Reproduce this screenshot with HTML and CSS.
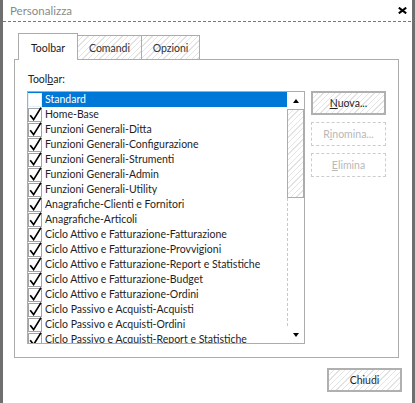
FILE: index.html
```html
<!DOCTYPE html>
<html lang="it">
<head>
<meta charset="utf-8">
<title>Personalizza</title>
<link rel="stylesheet" href="styles.css">
</head>
<body>
<svg class="defs" width="0" height="0" aria-hidden="true">
  <symbol id="chk" viewBox="0 0 14 15">
    <rect x="0.5" y="1.5" width="13" height="13" fill="#fff" stroke="#a3a3a3"/>
    <path d="M2.2 8.2 L5.6 12.6 L13 0.6" fill="none" stroke="#000" stroke-width="1.7" stroke-linejoin="miter"/>
  </symbol>
  <symbol id="unchk" viewBox="0 0 14 15">
    <rect x="0.5" y="1.5" width="13" height="13" fill="#fff" stroke="#e6f0fa"/>
  </symbol>
</svg>
<div class="window">
  <div class="titlebar">
    <span class="title">Personalizza</span>
    <svg class="close" width="9" height="7" viewBox="0 0 9 7"><path d="M0.8 0.6 L8.2 6.4 M8.2 0.6 L0.8 6.4" stroke="#000" stroke-width="2"/></svg>
  </div>
  <div class="tabs">
    <div class="tab active">Toolbar</div>
    <div class="tab hatch">Comandi</div>
    <div class="tab hatch">Opzioni</div>
  </div>
  <div class="panel">
    <div class="label">Tool<u>b</u>ar:</div>
    <div class="content">
      <div class="list">
        <div class="items">
          <div class="row sel"><svg class="cb"><use href="#unchk"/></svg>Standard</div>
          <div class="row"><svg class="cb"><use href="#chk"/></svg>Home-Base</div>
          <div class="row"><svg class="cb"><use href="#chk"/></svg>Funzioni Generali-Ditta</div>
          <div class="row"><svg class="cb"><use href="#chk"/></svg>Funzioni Generali-Configurazione</div>
          <div class="row"><svg class="cb"><use href="#chk"/></svg>Funzioni Generali-Strumenti</div>
          <div class="row"><svg class="cb"><use href="#chk"/></svg>Funzioni Generali-Admin</div>
          <div class="row"><svg class="cb"><use href="#chk"/></svg>Funzioni Generali-Utility</div>
          <div class="row"><svg class="cb"><use href="#chk"/></svg>Anagrafiche-Clienti e Fornitori</div>
          <div class="row"><svg class="cb"><use href="#chk"/></svg>Anagrafiche-Articoli</div>
          <div class="row"><svg class="cb"><use href="#chk"/></svg>Ciclo Attivo e Fatturazione-Fatturazione</div>
          <div class="row"><svg class="cb"><use href="#chk"/></svg>Ciclo Attivo e Fatturazione-Provvigioni</div>
          <div class="row"><svg class="cb"><use href="#chk"/></svg>Ciclo Attivo e Fatturazione-Report e Statistiche</div>
          <div class="row"><svg class="cb"><use href="#chk"/></svg>Ciclo Attivo e Fatturazione-Budget</div>
          <div class="row"><svg class="cb"><use href="#chk"/></svg>Ciclo Attivo e Fatturazione-Ordini</div>
          <div class="row"><svg class="cb"><use href="#chk"/></svg>Ciclo Passivo e Acquisti-Acquisti</div>
          <div class="row"><svg class="cb"><use href="#chk"/></svg>Ciclo Passivo e Acquisti-Ordini</div>
          <div class="row"><svg class="cb"><use href="#chk"/></svg>Ciclo Passivo e Acquisti-Report e Statistiche</div>
        </div>
        <div class="scrollbar">
          <div class="sb-btn"><span class="arrow-up"></span></div>
          <div class="thumb hatch"></div>
          <div class="track"></div>
          <div class="sb-btn"><span class="arrow-down"></span></div>
        </div>
      </div>
      <div class="buttons">
        <div class="btn hatch"><u>N</u>uova...</div>
        <div class="btn disabled">R<u>i</u>nomina...</div>
        <div class="btn disabled"><u>E</u>limina</div>
      </div>
    </div>
  </div>
  <div class="footer">
    <div class="btn hatch">Chiudi</div>
  </div>
</div>
</body>
</html>
```
FILE: styles.css
```css
* { box-sizing: border-box; }
html, body { margin: 0; padding: 0; background: #fff; }
body {
  font-family: Lato, "Open Sans", sans-serif;
  font-size: 10.5px;
  color: #222;
}
.defs { position: absolute; }
u { text-decoration: underline; text-underline-offset: 1px; }

.window {
  width: 415px;
  height: 403px;
  border-left: 3px solid #6f6f6f;
  border-right: 3px solid #6f6f6f;
  overflow: hidden;
}

.titlebar {
  height: 22px;
  display: flex;
  align-items: center;
  justify-content: space-between;
  padding: 0 5px 1px 7px;
  background-image: repeating-linear-gradient(90deg, #777 0 3px, transparent 3px 5px);
  background-size: 100% 1px;
  background-repeat: no-repeat;
  background-position: 0 21px;
}
.title {
  font-size: 11.5px;
  color: #8a8a8a;
  line-height: 16px;
}
.close { display: block; }

.hatch {
  background-color: #fff;
  background-image: repeating-linear-gradient(135deg, #fff 0 3px, #e3e3e3 3px 4px);
}

.tabs {
  position: relative;
  z-index: 1;
  display: flex;
  align-items: flex-end;
  height: 27px;
  margin: 11px 0 -1px 15px;
}
.tab {
  border: 1px solid #acacac;
  height: 25px;
  padding-top: 5px;
  line-height: 15px;
  text-align: center;
  color: #333;
}
.tab.active {
  height: 27px;
  width: 60px;
  padding-top: 7px;
  border-bottom: none;
  background: #fff;
  color: #1a1a1a;
}
.tab:nth-child(2) { width: 65px; margin-left: -1px; }
.tab:nth-child(3) { width: 59px; margin-left: -1px; }

.panel {
  position: relative;
  margin-left: 11px;
  width: 385px;
  height: 299px;
  border: 1px solid #acacac;
  background: #fff;
  padding: 12px 0 0 12px;
}
.panel::after {
  content: "";
  position: absolute;
  left: 2px;
  top: 2px;
  right: -4px;
  bottom: -4px;
  border: 1px solid #acacac;
  z-index: -1;
}

.label {
  line-height: 15px;
  height: 15px;
  margin: 0 0 4px 1px;
  color: #222;
}

.content { display: flex; align-items: flex-start; }

.list {
  width: 278px;
  height: 253px;
  border: 1px solid #acacac;
  display: flex;
  overflow: hidden;
}
.items { width: 259px; overflow: hidden; }
.row {
  height: 15px;
  line-height: 15px;
  display: flex;
  align-items: flex-start;
  white-space: nowrap;
  color: #1e1e1e;
}
.row.sel { background: #0078d7; color: #fff; }
.cb { width: 14px; height: 15px; flex: none; margin-right: 3px; }

.scrollbar {
  width: 17px;
  display: flex;
  flex-direction: column;
}
.sb-btn {
  height: 17px;
  display: flex;
  align-items: center;
  justify-content: center;
  flex: none;
}
.arrow-up {
  width: 0; height: 0;
  border-left: 3.5px solid transparent;
  border-right: 3.5px solid transparent;
  border-bottom: 4px solid #000;
}
.arrow-down {
  width: 0; height: 0;
  border-left: 3.5px solid transparent;
  border-right: 3.5px solid transparent;
  border-top: 4px solid #000;
}
.thumb {
  height: 89px;
  border: 1px solid #acacac;
  flex: none;
}
.track {
  flex: 1;
  border-left: 1px dashed #c8c8c8;
}

.buttons {
  margin-left: 6px;
  width: 75px;
  display: flex;
  flex-direction: column;
  gap: 7px;
}
.btn {
  width: 75px;
  height: 24px;
  border: 2px solid #b0b0b0;
  display: flex;
  align-items: center;
  justify-content: center;
  color: #1e1e1e;
  line-height: 15px;
}
.btn.disabled {
  border: 1px dashed #cdcdcd;
  color: #b8b8b8;
}

.footer {
  display: flex;
  justify-content: flex-end;
  padding: 10px 10px 0 0;
}
```
